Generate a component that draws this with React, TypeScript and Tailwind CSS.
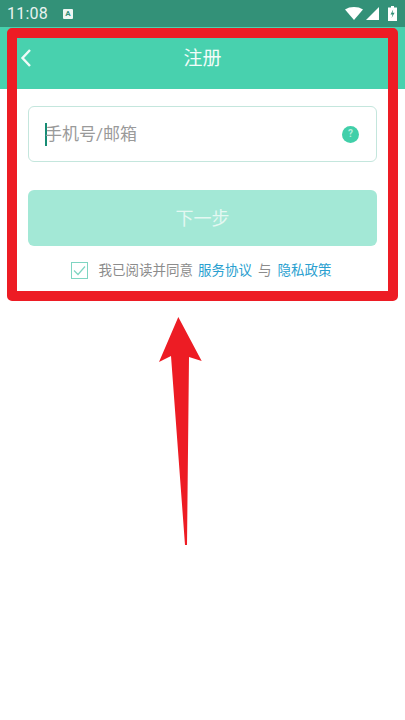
const cjk = "font-['Roboto','Noto_Sans_CJK_SC',sans-serif]";

function StatusBar() {
  return (
    <div className="h-[27px] bg-[#339178] flex items-center pl-[7px] pr-[8px] text-white">
      <span className="text-[16px] leading-none font-['Roboto',sans-serif] text-[#e8f3f0] tracking-[0.2px]">11:08</span>
      <span className="ml-[15px] w-[10px] h-[10px] bg-[#eef6f3] rounded-[1px] flex items-center justify-center text-[8px] leading-none font-bold text-[#339178] font-['Roboto',sans-serif]">
        A
      </span>
      <div className="ml-auto flex items-center">
        <svg width="18" height="13" viewBox="0 0 18 13">
          <path d="M0 2.5C2.5.8 5.6 0 9 0s6.500.8 9 2.500L9 13z" fill="#fff" />
        </svg>
        <svg width="13" height="13" viewBox="0 0 13 13" className="ml-[3px]">
          <path d="M13 0v13H0z" fill="#fff" />
        </svg>
        <svg width="9" height="15" viewBox="0 0 9 15" className="ml-[9px]">
          <path d="M3 0h3v1.500h3V15H0V1.500h3z" fill="#fff" />
          <path d="M5.200 3.500 2.500 8.500h2L3.600 12l3-5.200h-2z" fill="#339178" />
        </svg>
      </div>
    </div>
  );
}

function Header() {
  return (
    <div className="relative h-[62px] bg-[#48d1ae] flex items-center justify-center">
      <svg width="12" height="20" viewBox="0 0 12 20" className="absolute left-[20px] top-[21px]" fill="none">
        <path d="M10 2 2.500 10l7.500 8" stroke="#f0fbf8" strokeWidth="2.400" />
      </svg>
      <span className={`text-[19px] leading-none text-[#f2fcf9] ${cjk}`}>注册</span>
    </div>
  );
}

function PhoneInput() {
  return (
    <div className="h-[56px] rounded-[6px] border-[1.5px] border-[#c4e6dd] flex items-center pl-[16px] pr-[17px]">
      <span className="w-[2px] h-[23px] bg-[#178c74]" />
      <span className={`ml-[-2px] text-[17px] leading-none text-[#9a9a9a] ${cjk}`}>手机号/邮箱</span>
      <span className="ml-auto w-[17px] h-[17px] rounded-full bg-[#41cfa9] flex items-center justify-center text-[10px] leading-none font-bold text-[#b5eedd] font-['Roboto',sans-serif]">
        ?
      </span>
    </div>
  );
}

function Agreement() {
  return (
    <div className={`flex items-center justify-center mt-[16px] pr-[3px] text-[13.5px] leading-none ${cjk}`}>
      <span className="w-[17px] h-[17px] border-[1.5px] border-[#7fd5c2] flex items-center justify-center">
        <svg width="13" height="11" viewBox="0 0 13 11" fill="none">
          <path d="M1 5.500 5 9.500 12 1.500" stroke="#7fd5c2" strokeWidth="1.200" />
        </svg>
      </span>
      <span className="ml-[11px] text-[#8c8c8c]">我已阅读并同意</span>
      <span className="ml-[5px] text-[#2a9fd0]">服务协议</span>
      <span className="ml-[6px] text-[#8c8c8c]">与</span>
      <span className="ml-[6px] text-[#2a9fd0]">隐私政策</span>
    </div>
  );
}

export default function App() {
  return (
    <div className="relative w-[405px] h-[720px] bg-white overflow-hidden">
      <StatusBar />
      <Header />
      <div className="px-[28px] pt-[17px]">
        <PhoneInput />
        <button className={`mt-[28px] w-full h-[56px] rounded-[6px] bg-[#a3e8d6] text-[18px] text-[#e4f8f2] ${cjk}`}>
          下一步
        </button>
        <Agreement />
      </div>

      {/* red annotation drawn over the screenshot */}
      <div className="absolute left-[7px] top-[28px] w-[391px] h-[273px] border-[10px] border-[#ed1c24] rounded-[5px]" />
      <svg className="absolute left-[155px] top-[312px]" width="50" height="236" viewBox="0 0 50 236">
        <path d="M23.300 5 46.700 49 34 45 32 233h-2L16 44 4 50z" fill="#ed1c24" />
      </svg>
    </div>
  );
}
